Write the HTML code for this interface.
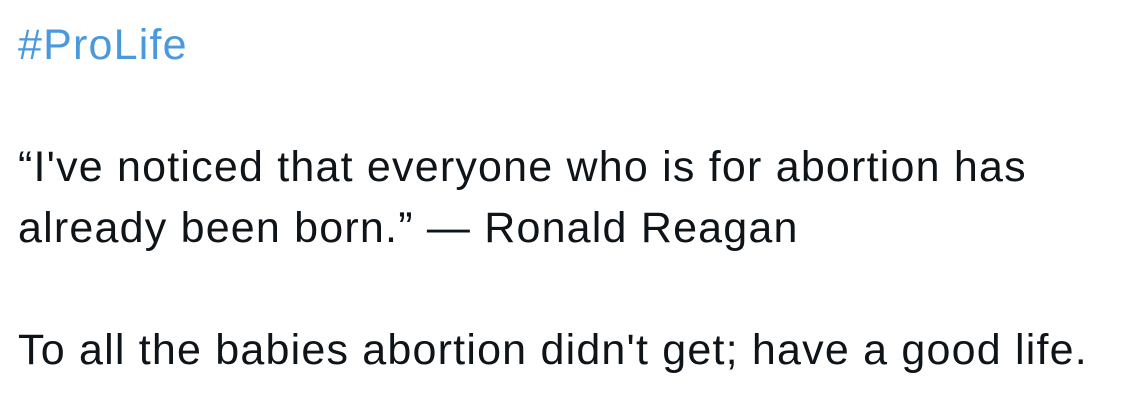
<!DOCTYPE html>
<html><head><meta charset="utf-8"><style>
html,body{margin:0;padding:0;background:#fff;width:1132px;height:400px;overflow:hidden}
.t{position:absolute;left:18px;top:15px;font-family:"Liberation Sans",sans-serif;font-size:43px;letter-spacing:1.2px;line-height:61px;color:#0f1419;white-space:pre}
.h{color:#4a99dd}
</style></head><body>
<div class="t"><span class="h">#ProLife</span>

“I've noticed that everyone who is for abortion has
already been born.” — Ronald Reagan

To all the babies abortion didn't get; have a good life.</div>
</body></html>
